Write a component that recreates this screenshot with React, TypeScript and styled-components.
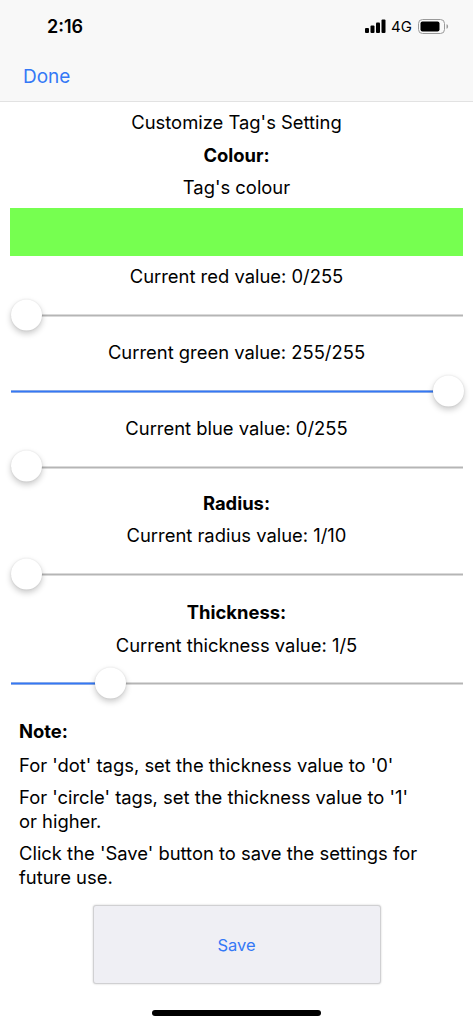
import React from 'react';
import styled, { createGlobalStyle } from 'styled-components';

const GlobalStyle = createGlobalStyle`
  html, body {
    margin: 0;
    padding: 0;
    background: #fff;
    font-family: Inter, "Liberation Sans", sans-serif;
    color: #000;
  }
`;

const Screen = styled.div`
  width: 473px;
  height: 1024px;
  overflow: hidden;
  display: flex;
  flex-direction: column;
`;

const NavBar = styled.header`
  height: 102px;
  flex: none;
  box-sizing: border-box;
  background: #f8f8f8;
  border-bottom: 1px solid #e2e2e2;
  display: flex;
  flex-direction: column;
`;

const StatusBar = styled.div`
  height: 52px;
  display: flex;
  align-items: center;
  justify-content: space-between;
  padding: 0 24px 0 47px;
`;

const Time = styled.span`
  font-size: 18px;
  font-weight: 600;
`;

const StatusIcons = styled.div`
  display: flex;
  align-items: center;
  gap: 6px;
  font-size: 15px;
`;

const SignalSvg = styled.svg`
  margin-right: -1px;
`;

const DoneLink = styled.a`
  margin: 5px 0 0 23px;
  font-size: 19px;
  line-height: 40px;
  color: #3478f6;
`;

const Content = styled.main`
  flex: 1;
  display: flex;
  flex-direction: column;
  padding-top: 5px;
`;

const Line = styled.div<{ $height?: number }>`
  height: ${({ $height }) => $height ?? 32}px;
  line-height: ${({ $height }) => ($height ?? 32) - 2}px;
  text-align: center;
  font-size: 18.4px;
`;

const Heading = styled(Line)`
  font-weight: 700;
`;

const Swatch = styled.div`
  height: 48px;
  margin: 5px 10px 5px;
  background: #76ff50;
`;

const SliderRow = styled.div<{ $height?: number }>`
  height: ${({ $height }) => $height ?? 44}px;
  margin: 0 10px 0 11px;
  display: flex;
  align-items: center;
`;

const Track = styled.div`
  position: relative;
  flex: 1;
  height: 2px;
  background: #b5b5b5;
  transform: translateY(0.5px);
`;

const TrackFill = styled.div`
  position: absolute;
  left: 0;
  top: 0;
  height: 100%;
  background: #3478f6;
`;

const Thumb = styled.div`
  position: absolute;
  top: -15.5px;
  width: 31px;
  height: 31px;
  margin-left: -15.5px;
  border-radius: 50%;
  background: #fff;
  box-shadow: 0 3px 6px rgba(0, 0, 0, 0.22), 0 0 2px rgba(0, 0, 0, 0.1);
`;

const NoteBlock = styled.section`
  margin-top: 10px;
  padding: 0 45px 0 19px;
  font-size: 18.4px;
  line-height: 24px;
`;

const NoteTitle = styled.p`
  margin: 0 0 6px;
  font-weight: 700;
  line-height: 32px;
`;

const NoteText = styled.p`
  margin: 0 0 8px;
`;

const SaveButton = styled.button`
  display: block;
  box-sizing: border-box;
  width: 288px;
  height: 79px;
  margin: 8px auto 0;
  padding: 0;
  border: 1px solid #d0d0d2;
  border-radius: 3px;
  background: #efeff4;
  box-shadow: 0 0 2px rgba(0, 0, 0, 0.22);
  color: #3478f6;
  font: inherit;
  font-size: 16.5px;
`;

const HomeBar = styled.div`
  width: 169px;
  height: 6px;
  margin: 26px auto 0;
  border-radius: 3px;
  background: #000;
`;

const Slider = ({ value, max, height }: { value: number; max: number; height?: number }) => {
  const ratio = value / max;
  // thumb centre runs 15px in from each end of the track
  const left = `calc(15px + (100% - 30px) * ${ratio})`;
  return (
    <SliderRow $height={height}>
      <Track>
        {ratio > 0 && <TrackFill style={{ width: left }} />}
        <Thumb style={{ left }} />
      </Track>
    </SliderRow>
  );
};

const SignalIcon = () => (
  <SignalSvg width="21" height="14" viewBox="0 0 21 14">
    <rect x="0" y="9" width="4" height="5" rx="1" fill="#000" />
    <rect x="5.5" y="6.5" width="4" height="7.5" rx="1" fill="#000" />
    <rect x="11" y="3.5" width="4" height="10.5" rx="1" fill="#000" />
    <rect x="16.5" y="0.5" width="4" height="13.5" rx="1" fill="#000" />
  </SignalSvg>
);

const BatteryIcon = () => (
  <svg width="31" height="15" viewBox="0 0 31 15">
    <rect x="0.5" y="0.5" width="26" height="14" rx="4" fill="none" stroke="#9a9a9a" />
    <rect x="2.5" y="2.5" width="19" height="10" rx="2" fill="#000" />
    <path d="M28.5 5.2c1 .3 1.6 1.2 1.6 2.3s-.6 2-1.6 2.3z" fill="#9a9a9a" />
  </svg>
);

export default function App() {
  return (
    <Screen>
      <GlobalStyle />
      <NavBar>
        <StatusBar>
          <Time>2:16</Time>
          <StatusIcons>
            <SignalIcon />
            <span>4G</span>
            <BatteryIcon />
          </StatusIcons>
        </StatusBar>
        <DoneLink>Done</DoneLink>
      </NavBar>
      <Content>
        <Line>Customize Tag's Setting</Line>
        <Heading $height={35}>Colour:</Heading>
        <Line $height={29}>Tag's colour</Line>
        <Swatch />
        <Line>Current red value: 0/255</Line>
        <Slider value={0} max={255} />
        <Line>Current green value: 255/255</Line>
        <Slider value={255} max={255} />
        <Line>Current blue value: 0/255</Line>
        <Slider value={0} max={255} height={43} />
        <Heading>Radius:</Heading>
        <Line>Current radius value: 1/10</Line>
        <Slider value={0} max={10} />
        <Heading $height={35}>Thickness:</Heading>
        <Line $height={30}>Current thickness value: 1/5</Line>
        <Slider value={1} max={5} />
        <NoteBlock>
          <NoteTitle>Note:</NoteTitle>
          <NoteText>For 'dot' tags, set the thickness value to '0'</NoteText>
          <NoteText>For 'circle' tags, set the thickness value to '1' or higher.</NoteText>
          <NoteText>Click the 'Save' button to save the settings for future use.</NoteText>
        </NoteBlock>
        <SaveButton>Save</SaveButton>
        <HomeBar />
      </Content>
    </Screen>
  );
}
